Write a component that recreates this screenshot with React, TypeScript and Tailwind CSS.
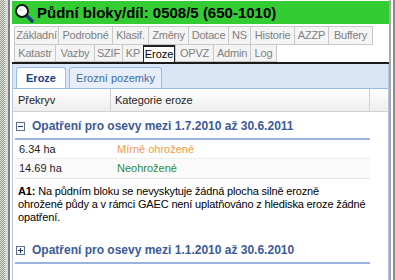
import { Plus, Minus } from 'lucide-react';

const topTabs = [
  { label: 'Základní', w: 'w-[44px]' },
  { label: 'Podrobné', w: 'w-[54px]' },
  { label: 'Klasif.', w: 'w-[36px]' },
  { label: 'Změny', w: 'w-[40px]' },
  { label: 'Dotace', w: 'w-[40px]' },
  { label: 'NS', w: 'w-[22px]' },
  { label: 'Historie', w: 'w-[44px]' },
  { label: 'AZZP', w: 'w-[34px]' },
  { label: 'Buffery', w: 'w-[45px]' },
];

const bottomTabs = [
  { label: 'Katastr', w: 'w-[41px]' },
  { label: 'Vazby', w: 'w-[39px]' },
  { label: 'SZIF', w: 'w-[28px]' },
  { label: 'KP', w: 'w-[21px]' },
  { label: 'Eroze', w: 'w-[32px]', active: true },
  { label: 'OPVZ', w: 'w-[38px]' },
  { label: 'Admin', w: 'w-[37px]' },
  { label: 'Log', w: 'w-[27px]' },
];

function Magnifier() {
  return (
    <svg width="20" height="20" viewBox="0 0 20 20">
      <line x1="11" y1="11" x2="18" y2="18" stroke="#1d3a7a" strokeWidth="3.5" strokeLinecap="round" />
      <circle cx="8" cy="8" r="6" fill="#ffffff" stroke="#111" strokeWidth="1.8" />
      <circle cx="6.5" cy="6.5" r="2" fill="#dfe9f7" />
    </svg>
  );
}

function GroupToggle({ open }: { open: boolean }) {
  return (
    <span className="w-[9px] h-[9px] border border-[#5a6f96] bg-white flex items-center justify-center">
      {open ? <Minus className="w-[7px] h-[7px] text-[#1e3566]" strokeWidth={4} /> : <Plus className="w-[7px] h-[7px] text-[#1e3566]" strokeWidth={4} />}
    </span>
  );
}

function GroupHeader({ open, text }: { open: boolean; text: string }) {
  return (
    <div className="mr-[18px] ml-[2px] h-[26px] flex items-center gap-[7px] pl-[1px] border-b-2 border-[#99b3e0]">
      <GroupToggle open={open} />
      <span className="text-[12px] font-bold text-[#3c5a98]">{text}</span>
    </div>
  );
}

export default function App() {
  return (
    <div className="w-[395px] h-[280px] flex bg-white overflow-hidden text-[11px] text-[#222]" style={{ fontFamily: 'Tahoma, "Liberation Sans", Arial, sans-serif' }}>
      {/* left desktop edge */}
      <div className="w-[5px] shrink-0 bg-[repeating-conic-gradient(#8f988a_0_25%,#e3e6df_0_50%)] bg-[length:2px_2px]" />
      <div className="w-[3px] shrink-0 bg-[#d8d8d8]" />
      <div className="w-[2px] shrink-0 bg-[#7d7d7d]" />
      <div className="w-[2px] shrink-0 bg-white" />

      <div className="flex-1 flex flex-col min-w-0 pt-[1px]">
        {/* title bar */}
        <div className="h-[23px] bg-[#33cc33] flex items-center gap-[3px] pl-[2px]">
          <Magnifier />
          <span className="text-[15px] font-bold text-black leading-none" style={{ fontFamily: '"Liberation Sans", Arial, sans-serif' }}>
            Půdní bloky/díl: 0508/5 (650-1010)
          </span>
        </div>

        {/* tabs */}
        <div className="mt-[2px] pl-[2px]">
          <div className="flex h-[19px]">
            {topTabs.map(t => (
              <div key={t.label} className={`${t.w} h-full border border-r-0 last:border-r border-[#c8c8c8] bg-[#f4f4f4] text-[#808080] flex items-center justify-center text-[11px] tracking-[-0.2px]`}>
                {t.label}
              </div>
            ))}
          </div>
          <div className="flex h-[17px]">
            {bottomTabs.map(t => (
              <div
                key={t.label}
                className={
                  t.active
                    ? `${t.w} h-full border-x border-t-2 border-[#222] bg-white text-black flex items-center justify-center`
                    : `${t.w} h-full border border-t-0 border-r-0 last:border-r border-[#c8c8c8] bg-[#f4f4f4] text-[#808080] flex items-center justify-center tracking-[-0.2px]`
                }
              >
                {t.label}
              </div>
            ))}
          </div>
        </div>
        <div className="h-[2px] bg-[#1a1a1a]" />

        {/* inner panel */}
        <div className="flex-1 flex flex-col border-x border-[#b5c7e2] bg-white">
          <div className="h-[25px] bg-[#dae6f6] border-b border-[#99bbe8] flex items-end pl-[3px] gap-[3px]">
            <div className="w-[50px] h-[21px] bg-white border border-b-0 border-[#99bbe8] rounded-t-[3px] flex items-center justify-center font-bold text-[#15428b] text-[11px]">
              Eroze
            </div>
            <div className="w-[93px] h-[21px] bg-[#e6eef9] border border-b-0 border-[#99bbe8] rounded-t-[3px] flex items-center justify-center text-[#416aa3] text-[11px]">
              Erozní pozemky
            </div>
          </div>

          {/* grid header */}
          <div className="h-[23px] flex bg-gradient-to-b from-white to-[#ededed] border-b border-[#d0d0d0] text-[#222]">
            <div className="w-[98px] pl-[5px] flex items-center border-r border-[#d0d0d0]">Překryv</div>
            <div className="w-[259px] pl-[4px] flex items-center border-r border-[#d0d0d0]">Kategorie eroze</div>
            <div className="flex-1" />
          </div>

          <div className="pt-[2px]">
            <GroupHeader open text="Opatření pro osevy mezi 1.7.2010 až 30.6.2011" />
            <div className="mr-[18px] ml-[2px]">
              <div className="h-[19px] flex items-center border-b border-[#ededed]">
                <div className="w-[98px] pl-[4px]">6.34 ha</div>
                <div className="pl-[4px] text-[#f29a4a]">Mírně ohrožené</div>
              </div>
              <div className="h-[20px] flex items-center bg-[#fafafa] border-b border-[#e3e3e3]">
                <div className="w-[98px] pl-[4px] text-[#2a1a2a]">14.69 ha</div>
                <div className="pl-[4px] text-[#2f8a3a]">Neohrožené</div>
              </div>
            </div>

            <p className="mt-[6px] ml-[5px] mr-[2px] leading-[13px] text-[11px] text-black tracking-[-0.15px]">
              <span className="font-bold">A1:</span> Na půdním bloku se nevyskytuje žádná plocha silně erozně
              <br />
              ohrožené půdy a v rámci GAEC není uplatňováno z hlediska eroze žádné opatření.
            </p>

            <div className="mt-[14px]">
              <GroupHeader open={false} text="Opatření pro osevy mezi 1.1.2010 až 30.6.2010" />
            </div>
          </div>
        </div>
      </div>

      {/* right edge */}
      <div className="w-[2px] shrink-0 bg-[#a8a8a8]" />
      <div className="w-[2px] shrink-0 bg-white" />
      <div className="w-[2px] shrink-0 bg-[#8c8c8c]" />
    </div>
  );
}
